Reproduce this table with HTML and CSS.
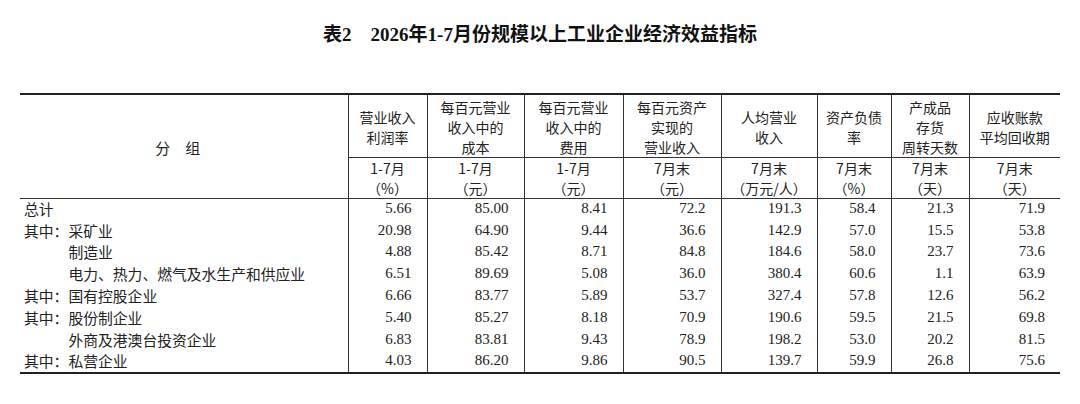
FILE: index.html
```html
<!DOCTYPE html>
<html lang="zh-CN">
<head>
<meta charset="utf-8">
<title>表2 2026年1-7月份规模以上工业企业经济效益指标</title>
<link rel="stylesheet" href="styles.css">
</head>
<body>
<div class="page">
  <h1 class="title">表2　2026年1-7月份规模以上工业企业经济效益指标</h1>
  <table class="data">
    <colgroup>
      <col class="w-grp"><col class="w-1"><col class="w-2"><col class="w-3"><col class="w-4"><col class="w-5"><col class="w-6"><col class="w-7"><col class="w-8">
    </colgroup>
    <thead>
      <tr class="h1">
        <th rowspan="2" class="grp">分　组</th>
        <th>营业收入<br>利润率</th>
        <th>每百元营业<br>收入中的<br>成本</th>
        <th>每百元营业<br>收入中的<br>费用</th>
        <th>每百元资产<br>实现的<br>营业收入</th>
        <th>人均营业<br>收入</th>
        <th>资产负债<br>率</th>
        <th>产成品<br>存货<br>周转天数</th>
        <th>应收账款<br>平均回收期</th>
      </tr>
      <tr class="h2">
        <th>1-7月<br>（%）</th>
        <th>1-7月<br>（元）</th>
        <th>1-7月<br>（元）</th>
        <th>7月末<br>（元）</th>
        <th>7月末<br>（万元/人）</th>
        <th>7月末<br>（%）</th>
        <th>7月末<br>（天）</th>
        <th>7月末<br>（天）</th>
      </tr>
    </thead>
    <tbody>
      <tr><td class="name">总计</td><td>5.66</td><td>85.00</td><td>8.41</td><td>72.2</td><td>191.3</td><td>58.4</td><td>21.3</td><td>71.9</td></tr>
      <tr><td class="name">其中：采矿业</td><td>20.98</td><td>64.90</td><td>9.44</td><td>36.6</td><td>142.9</td><td>57.0</td><td>15.5</td><td>53.8</td></tr>
      <tr><td class="name ind">制造业</td><td>4.88</td><td>85.42</td><td>8.71</td><td>84.8</td><td>184.6</td><td>58.0</td><td>23.7</td><td>73.6</td></tr>
      <tr><td class="name ind">电力、热力、燃气及水生产和供应业</td><td>6.51</td><td>89.69</td><td>5.08</td><td>36.0</td><td>380.4</td><td>60.6</td><td>1.1</td><td>63.9</td></tr>
      <tr><td class="name">其中：国有控股企业</td><td>6.66</td><td>83.77</td><td>5.89</td><td>53.7</td><td>327.4</td><td>57.8</td><td>12.6</td><td>56.2</td></tr>
      <tr><td class="name">其中：股份制企业</td><td>5.40</td><td>85.27</td><td>8.18</td><td>70.9</td><td>190.6</td><td>59.5</td><td>21.5</td><td>69.8</td></tr>
      <tr><td class="name ind">外商及港澳台投资企业</td><td>6.83</td><td>83.81</td><td>9.43</td><td>78.9</td><td>198.2</td><td>53.0</td><td>20.2</td><td>81.5</td></tr>
      <tr><td class="name">其中：私营企业</td><td>4.03</td><td>86.20</td><td>9.86</td><td>90.5</td><td>139.7</td><td>59.9</td><td>26.8</td><td>75.6</td></tr>
    </tbody>
  </table>
</div>
</body>
</html>
```
FILE: styles.css
```css
* { box-sizing: border-box; }
html, body { margin: 0; padding: 0; background: #fff; }
body {
  font-family: "Noto Sans CJK SC", sans-serif;
  color: #222;
}
.page {
  width: 1080px;
  height: 404px;
  padding-top: 20px;
}
.title {
  margin: 0;
  height: 30px;
  line-height: 30px;
  text-align: center;
  font-family: "Liberation Serif", "Noto Sans CJK SC", serif;
  font-size: 19px;
  font-weight: bold;
  color: #111;
}
.data {
  margin: 43px 0 0 20px;
  width: 1040px;
  table-layout: fixed;
  border-collapse: collapse;
  border-top: 2px solid #222;
  border-bottom: 2px solid #222;
}
.w-grp { width: 328px; }
.w-1 { width: 79px; }
.w-2 { width: 97px; }
.w-3 { width: 99px; }
.w-4 { width: 98px; }
.w-5 { width: 96px; }
.w-6 { width: 74px; }
.w-7 { width: 78px; }
.w-8 { width: 91px; }

.data th {
  font-weight: normal;
  font-size: 14px;
  text-align: center;
  vertical-align: middle;
  padding: 0;
  border-left: 1px solid #333;
  border-bottom: 1px solid #333;
  white-space: nowrap;
}
.data .h1 th { height: 63px; line-height: 20px; padding-top: 2px; }
.data .h2 th { height: 40px; line-height: 20px; }
.data th.grp {
  border-left: none;
  padding-right: 12px;
  font-size: 15px;
}
.data td {
  height: 21.8px;
  line-height: 19px;
  padding: 0 15px 2px 0;
  text-align: right;
  font-family: "Liberation Serif", serif;
  font-size: 15px;
  border-left: 1px solid #333;
  white-space: nowrap;
}
.data td.name {
  border-left: none;
  text-align: left;
  padding: 0 0 2px 4px;
  font-family: "Noto Sans CJK SC", sans-serif;
  font-size: 14.8px;
}
.data td.name.ind { padding-left: calc(4px + 3em); }
```
